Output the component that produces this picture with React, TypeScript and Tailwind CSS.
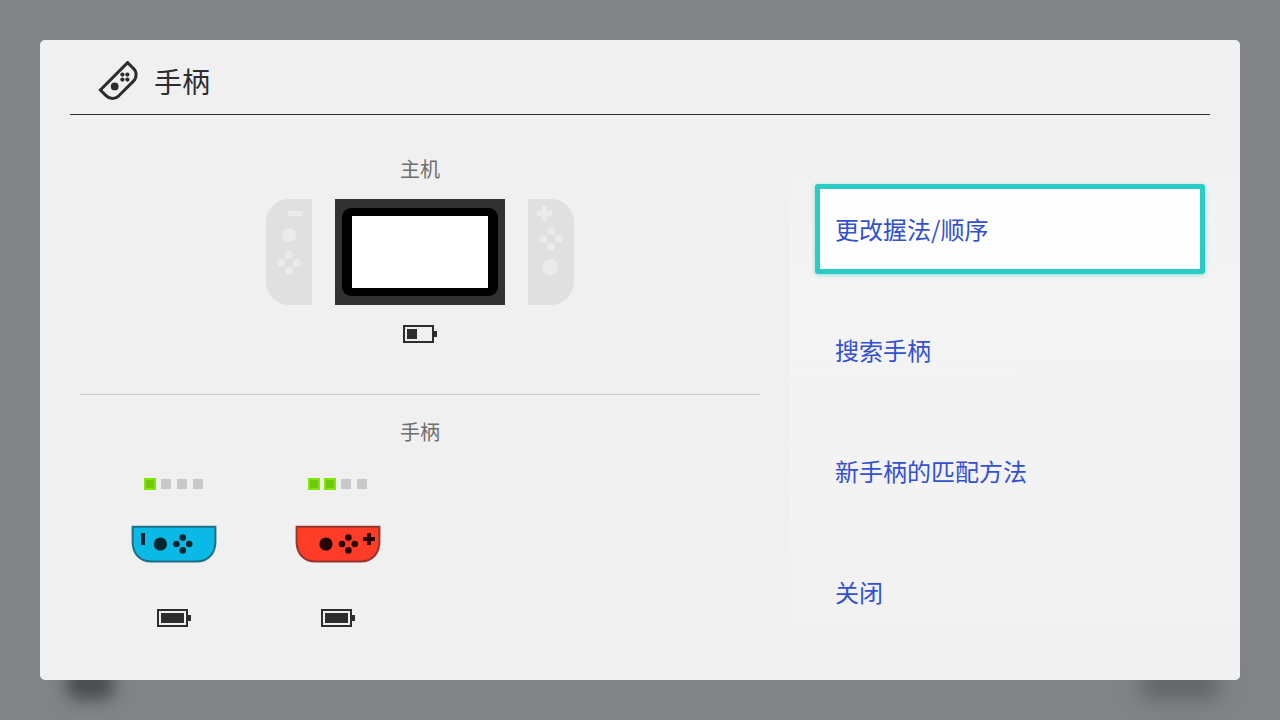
import { useState } from 'react'

type Side = 'left' | 'right'

interface Pad {
  id: string
  name: string
  side: Side
  player: number
  battery: number
}

const PADS: Pad[] = [
  { id: 'p1', name: 'Joy-Con (L)', side: 'left', player: 1, battery: 100 },
  { id: 'p2', name: 'Joy-Con (R)', side: 'right', player: 2, battery: 100 },
]

const MENU = ['更改握法/顺序', '搜索手柄', '新手柄的匹配方法', '关闭']

function Battery({ level }: { level: number }) {
  return (
    <svg width="34" height="18" viewBox="0 0 34 18" role="img" aria-label={`${level}%`}>
      <rect x="1" y="1" width="29" height="16" fill="none" stroke="#2d2d2d" strokeWidth="2" />
      <rect x="31" y="6" width="3" height="6" fill="#2d2d2d" />
      <rect x="4" y="4" width={Math.round((23 * level) / 100)} height="10" fill="#2d2d2d" />
    </svg>
  )
}

// Four round buttons in a diamond
function Diamond({ cx, cy, gap, r }: { cx: number; cy: number; gap: number; r: number }) {
  return (
    <>
      <circle cx={cx} cy={cy - gap} r={r} />
      <circle cx={cx - gap} cy={cy} r={r} />
      <circle cx={cx + gap} cy={cy} r={r} />
      <circle cx={cx} cy={cy + gap} r={r} />
    </>
  )
}

function HeaderIcon() {
  return (
    <svg width="41" height="41" viewBox="0 1 41 41" aria-hidden="true">
      <path
        d="M29.6 2.6 L2.4 30 L8 35.6 C11.8 39.4 17 39.4 20.8 35.8 L35 21.6 C39.2 17.4 39 11.8 35.2 8.2 Z"
        fill="none"
        stroke="#2d2d2d"
        strokeWidth="3"
      />
      <g fill="#2d2d2d">
        <circle cx="16.7" cy="26.4" r="3.9" />
        <circle cx="24.4" cy="14.6" r="2.1" />
        <circle cx="29.4" cy="14.6" r="2.1" />
        <circle cx="24.4" cy="19.6" r="2.1" />
        <circle cx="29.4" cy="19.6" r="2.1" />
      </g>
    </svg>
  )
}

function DetachedRail({ side }: { side: Side }) {
  return (
    <svg width="46" height="106" viewBox="0 0 46 106" aria-hidden="true">
      {side === 'left' ? (
        <>
          <path d="M46 0 H24 C10 0 0 10 0 24 V82 C0 96 10 106 24 106 H46 Z" fill="#e0e0e0" />
          <g fill="#ebebeb">
            <path d="M22 12 H38 L36 17 H22 Z" />
            <circle cx="23" cy="36" r="7" />
            <Diamond cx={23} cy={64} gap={8} r={4} />
          </g>
        </>
      ) : (
        <>
          <path d="M0 0 H22 C36 0 46 10 46 24 V82 C46 96 36 106 22 106 H0 Z" fill="#e0e0e0" />
          <g fill="#ebebeb">
            <path d="M14 7 H19 V12 H24 V17 H19 V22 H14 V17 H9 V12 H14 Z" />
            <Diamond cx={23} cy={40} gap={8} r={4} />
            <circle cx="22" cy="68" r="8" />
          </g>
        </>
      )}
    </svg>
  )
}

function JoyCon({ side, name }: { side: Side; name: string }) {
  const left = side === 'left'
  return (
    <svg width="86" height="38" viewBox="0 0 86 38" role="img" aria-label={name}>
      <path
        d="M1.6 1.8 H84.4 V17 C84.4 29 76.6 36.4 65.8 36.4 H20.2 C9.4 36.4 1.6 29 1.6 17 Z"
        fill={left ? '#0ab9e6' : '#ff3c28'}
        stroke={left ? '#1f6f85' : '#96352b'}
        strokeWidth="2"
      />
      <g fill={left ? '#04262e' : '#260604'}>
        <circle cx={left ? 29.4 : 31} cy="19" r="6.6" />
        <Diamond cx={left ? 51.8 : 53.4} cy={19} gap={6.4} r={3.3} />
        {left ? (
          <rect x="10" y="8" width="4" height="12" />
        ) : (
          <path d="M72 8 H76 V12 H80 V16 H76 V20 H72 V16 H68 V12 H72 Z" />
        )}
      </g>
    </svg>
  )
}

function PlayerLights({ count }: { count: number }) {
  return (
    <div className="flex h-3 items-center gap-1">
      {[1, 2, 3, 4].map((n) => (
        <span key={n} className="flex size-3 items-center justify-center">
          {n <= count ? (
            <span className="size-3 border-2 border-[#82e60a] bg-[#6fc80a]" />
          ) : (
            <span className="size-[10px] bg-[#c8c8c8]" />
          )}
        </span>
      ))}
    </div>
  )
}

function PadColumn({ pad }: { pad: Pad }) {
  return (
    <li className="flex w-[164px] flex-col items-center">
      <PlayerLights count={pad.player} />
      <div className="mt-[35px]">
        <JoyCon side={pad.side} name={pad.name} />
      </div>
      <div className="mt-[46px]">
        <Battery level={pad.battery} />
      </div>
    </li>
  )
}

export default function App() {
  const [selected, setSelected] = useState(0)

  return (
    <div className="relative flex min-h-screen flex-col overflow-hidden bg-[#808486] p-10 font-['Noto_Sans_CJK_SC',sans-serif] [&_svg]:block">
      {/* dimmed footer hints behind the dialog */}
      <div className="absolute bottom-5 left-[66px] h-8 w-12 rounded-xl bg-[#4a4d4f] blur-[8px]" />
      <div className="absolute right-[60px] bottom-5 h-8 w-20 rounded-xl bg-[#626668] blur-[10px]" />

      <main className="relative flex flex-1 flex-col rounded-[5px] bg-[#f0f0f0]">
        <header className="mx-[30px] flex h-[75px] items-center gap-[15px] border-b border-[#2d2d2d] pt-2 pl-7">
          <HeaderIcon />
          <h1 className="text-[28px] leading-10 text-[#2d2d2d]">手柄</h1>
        </header>

        <div className="grid flex-1 grid-cols-[5fr_3fr]">
          <div className="pr-[30px] pl-10">
            <section className="flex flex-col items-center border-b border-[#cdcdcd] pt-10 pb-[51px]">
              <h2 className="text-[20px] leading-7 text-[#6e6e6e]">主机</h2>
              <div className="mt-4 flex gap-[23px]">
                <DetachedRail side="left" />
                <div className="h-[106px] w-[170px] bg-[#323232] px-[7px] py-[9px]">
                  <div className="h-full rounded-[9px] bg-black px-[10px] py-2">
                    <div className="h-full bg-white" />
                  </div>
                </div>
                <DetachedRail side="right" />
              </div>
              <div className="mt-5">
                <Battery level={43} />
              </div>
            </section>

            <section className="pt-[23px] pb-[51px]">
              <h2 className="text-center text-[20px] leading-7 text-[#6e6e6e]">手柄</h2>
              <ul className="mt-8 flex pl-3">
                {PADS.map((pad) => (
                  <PadColumn key={pad.id} pad={pad} />
                ))}
              </ul>
            </section>
          </div>

          <nav className="flex flex-col gap-[31px] rounded-br-[5px] bg-linear-to-b from-[#f0f0f0] via-[#f4f4f4] via-30% to-[#f1f1f1] px-[25px] pt-[69px] pr-[35px]">
            {MENU.map((label, i) => (
              <button
                key={label}
                type="button"
                onClick={() => setSelected(i)}
                className={`h-[90px] w-full shrink-0 rounded-[3px] border-[5px] px-[15px] text-left text-[24px] leading-8 text-[#3250d0] ${
                  i === selected
                    ? 'border-[#2bcbc6] bg-[#fdfdfd] shadow-[0_1px_4px_rgba(43,203,198,0.5)]'
                    : 'border-transparent'
                }`}
              >
                {label}
              </button>
            ))}
          </nav>
        </div>
      </main>
    </div>
  )
}
